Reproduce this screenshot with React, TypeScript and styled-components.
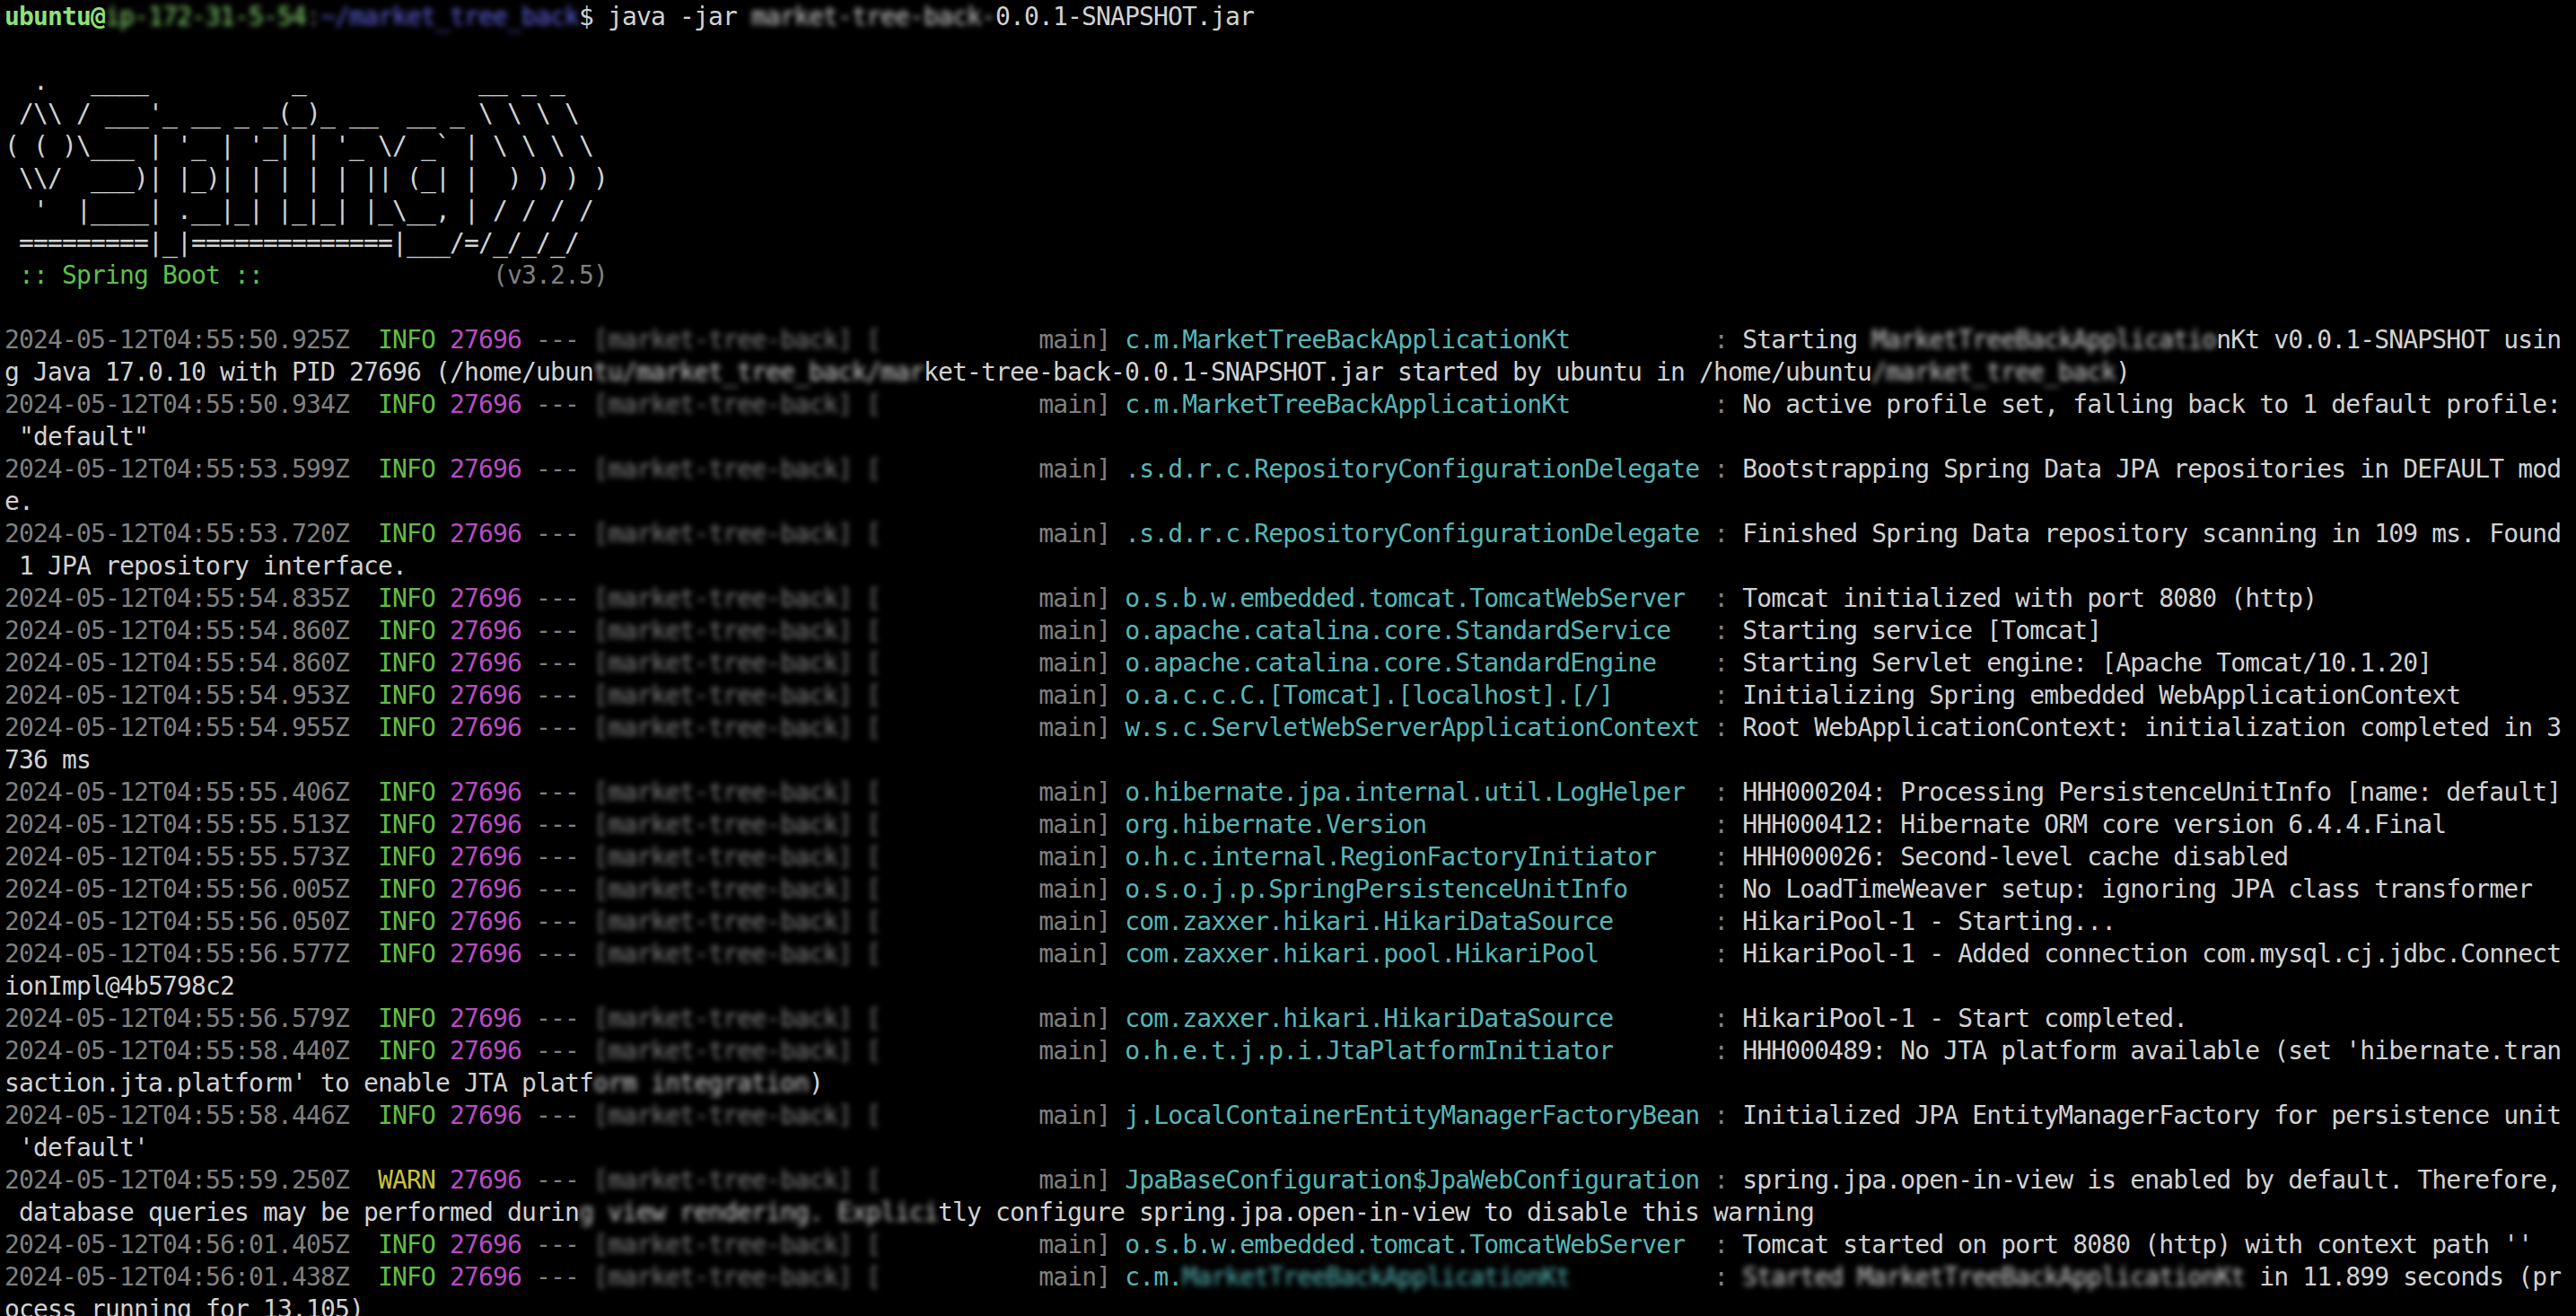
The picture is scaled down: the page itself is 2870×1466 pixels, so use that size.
import React from "react";
import styled, { createGlobalStyle, css } from "styled-components";

const COLS = 178;

type Tone = "text" | "faint" | "green" | "magenta" | "cyan" | "yellow" | "prompt" | "path" | "boot";
type Seg = { t: string; tone: Tone; masked?: boolean; bold?: boolean };

const palette: Record<Tone, string> = {
  text: "#d2d2d2",
  faint: "#808080",
  green: "#62bd45",
  magenta: "#b94cc3",
  cyan: "#57b6b6",
  yellow: "#c9c23e",
  prompt: "#8fe07a",
  path: "#6464e8",
  boot: "#5fc04a",
};

const GlobalStyle = createGlobalStyle`
  html, body {
    margin: 0;
    padding: 0;
    height: 100%;
    overflow: hidden;
    background: #000;
  }
`;

const Terminal = styled.main`
  box-sizing: border-box;
  width: 2870px;
  height: 1466px;
  padding: 1px 0 0 5px;
  background: #000;
  color: ${palette.text};
  font-family: "DejaVu Sans Mono", "Liberation Mono", monospace;
  font-size: 28px;
  letter-spacing: -0.857px;
  line-height: 36px;
  overflow: hidden;
  display: flex;
  flex-direction: column;
`;

const Row = styled.div`
  flex: none;
  height: 36px;
  white-space: pre;
`;

const Piece = styled.span<{ $tone: Tone; $masked?: boolean; $bold?: boolean }>`
  color: ${(p) => palette[p.$tone]};
  font-weight: ${(p) => (p.$bold ? 700 : 400)};
  ${(p) =>
    p.$masked &&
    css`
      filter: blur(3px);
    `}
`;

const s = (t: string, tone: Tone = "text", masked = false, bold = false): Seg => ({ t, tone, masked, bold });

function wrap(segs: Seg[], cols = COLS): Seg[][] {
  const rows: Seg[][] = [[]];
  let used = 0;
  for (const seg of segs) {
    let rest = seg.t;
    while (rest.length) {
      if (used === cols) {
        rows.push([]);
        used = 0;
      }
      const part = rest.slice(0, cols - used);
      rows[rows.length - 1].push({ ...seg, t: part });
      used += part.length;
      rest = rest.slice(part.length);
    }
  }
  return rows;
}

function logLine(time: string, level: "INFO" | "WARN", logger: Seg[] | string, msg: Seg[] | string): Seg[] {
  const loggerSegs = typeof logger === "string" ? [s(logger, "cyan")] : logger;
  const len = loggerSegs.reduce((n, x) => n + x.t.length, 0);
  const msgSegs = typeof msg === "string" ? [s(msg)] : msg;
  return [
    s(`2024-05-12T04:${time}`, "faint"),
    s("  "),
    s(level, level === "WARN" ? "yellow" : "green"),
    s(" "),
    s("27696", "magenta"),
    s(" "),
    s("---", "faint"),
    s(" "),
    s("[market-tree-back] [", "faint", true),
    s("           main]", "faint"),
    s(" "),
    ...loggerSegs,
    s(" ".repeat(Math.max(0, 40 - len))),
    s(" "),
    s(":", "faint"),
    s(" "),
    ...msgSegs,
  ];
}

const banner = [
  "  .   ____          _            __ _ _",
  " /\\\\ / ___'_ __ _ _(_)_ __  __ _ \\ \\ \\ \\",
  "( ( )\\___ | '_ | '_| | '_ \\/ _` | \\ \\ \\ \\",
  " \\\\/  ___)| |_)| | | | | || (_| |  ) ) ) )",
  "  '  |____| .__|_| |_|_| |_\\__, | / / / /",
  " =========|_|==============|___/=/_/_/_/",
];

const lines: Seg[][] = [
  [
    s("ubuntu@", "prompt", false, true),
    s("ip-172-31-5-54", "prompt", true),
    s(":", "faint", true),
    s("~/market_tree_back", "path", true),
    s("$ java -jar "),
    s("market-tree-back-", "text", true),
    s("0.0.1-SNAPSHOT.jar"),
  ],
  [],
  ...banner.map((b) => [s(b)]),
  [s(" :: Spring Boot :: ", "boot"), s("               "), s("(v3.2.5)", "faint")],
  [],
  logLine("55:50.925Z", "INFO", "c.m.MarketTreeBackApplicationKt", [
    s("Starting "),
    s("MarketTreeBackApplicatio", "text", true),
    s("nKt v0.0.1-SNAPSHOT using Java 17.0.10 with PID 27696 (/home/ubun"),
    s("tu/market_tree_back/mar", "text", true),
    s("ket-tree-back-0.0.1-SNAPSHOT.jar started by ubuntu in /home/ubuntu"),
    s("/market_tree_back", "text", true),
    s(")"),
  ]),
  logLine(
    "55:50.934Z",
    "INFO",
    "c.m.MarketTreeBackApplicationKt",
    'No active profile set, falling back to 1 default profile: "default"'
  ),
  logLine(
    "55:53.599Z",
    "INFO",
    ".s.d.r.c.RepositoryConfigurationDelegate",
    "Bootstrapping Spring Data JPA repositories in DEFAULT mode."
  ),
  logLine(
    "55:53.720Z",
    "INFO",
    ".s.d.r.c.RepositoryConfigurationDelegate",
    "Finished Spring Data repository scanning in 109 ms. Found 1 JPA repository interface."
  ),
  logLine("55:54.835Z", "INFO", "o.s.b.w.embedded.tomcat.TomcatWebServer", "Tomcat initialized with port 8080 (http)"),
  logLine("55:54.860Z", "INFO", "o.apache.catalina.core.StandardService", "Starting service [Tomcat]"),
  logLine("55:54.860Z", "INFO", "o.apache.catalina.core.StandardEngine", "Starting Servlet engine: [Apache Tomcat/10.1.20]"),
  logLine("55:54.953Z", "INFO", "o.a.c.c.C.[Tomcat].[localhost].[/]", "Initializing Spring embedded WebApplicationContext"),
  logLine(
    "55:54.955Z",
    "INFO",
    "w.s.c.ServletWebServerApplicationContext",
    "Root WebApplicationContext: initialization completed in 3736 ms"
  ),
  logLine(
    "55:55.406Z",
    "INFO",
    "o.hibernate.jpa.internal.util.LogHelper",
    "HHH000204: Processing PersistenceUnitInfo [name: default]"
  ),
  logLine("55:55.513Z", "INFO", "org.hibernate.Version", "HHH000412: Hibernate ORM core version 6.4.4.Final"),
  logLine("55:55.573Z", "INFO", "o.h.c.internal.RegionFactoryInitiator", "HHH000026: Second-level cache disabled"),
  logLine(
    "55:56.005Z",
    "INFO",
    "o.s.o.j.p.SpringPersistenceUnitInfo",
    "No LoadTimeWeaver setup: ignoring JPA class transformer"
  ),
  logLine("55:56.050Z", "INFO", "com.zaxxer.hikari.HikariDataSource", "HikariPool-1 - Starting..."),
  logLine(
    "55:56.577Z",
    "INFO",
    "com.zaxxer.hikari.pool.HikariPool",
    "HikariPool-1 - Added connection com.mysql.cj.jdbc.ConnectionImpl@4b5798c2"
  ),
  logLine("55:56.579Z", "INFO", "com.zaxxer.hikari.HikariDataSource", "HikariPool-1 - Start completed."),
  logLine("55:58.440Z", "INFO", "o.h.e.t.j.p.i.JtaPlatformInitiator", [
    s("HHH000489: No JTA platform available (set 'hibernate.transaction.jta.platform' to enable JTA platf"),
    s("orm integration", "text", true),
    s(")"),
  ]),
  logLine(
    "55:58.446Z",
    "INFO",
    "j.LocalContainerEntityManagerFactoryBean",
    "Initialized JPA EntityManagerFactory for persistence unit 'default'"
  ),
  logLine("55:59.250Z", "WARN", "JpaBaseConfiguration$JpaWebConfiguration", [
    s("spring.jpa.open-in-view is enabled by default. Therefore, database queries may be performed durin"),
    s("g view rendering. Explici", "text", true),
    s("tly configure spring.jpa.open-in-view to disable this warning"),
  ]),
  logLine(
    "56:01.405Z",
    "INFO",
    "o.s.b.w.embedded.tomcat.TomcatWebServer",
    "Tomcat started on port 8080 (http) with context path ''"
  ),
  logLine(
    "56:01.438Z",
    "INFO",
    [s("c.m.", "cyan"), s("MarketTreeBackApplicationKt", "cyan", true)],
    [s("Started MarketTreeBackApplicationKt", "text", true), s(" in 11.899 seconds (process running for 13.105)")]
  ),
];

const rows: Seg[][] = lines.flatMap((l) => (l.length ? wrap(l) : [[]]));

export default function App() {
  return (
    <>
      <GlobalStyle />
      <Terminal>
        {rows.map((row, i) => (
          <Row key={i}>
            {row.length === 0
              ? " "
              : row.map((seg, j) => (
                  <Piece key={j} $tone={seg.tone} $masked={seg.masked} $bold={seg.bold}>
                    {seg.t}
                  </Piece>
                ))}
          </Row>
        ))}
      </Terminal>
    </>
  );
}
